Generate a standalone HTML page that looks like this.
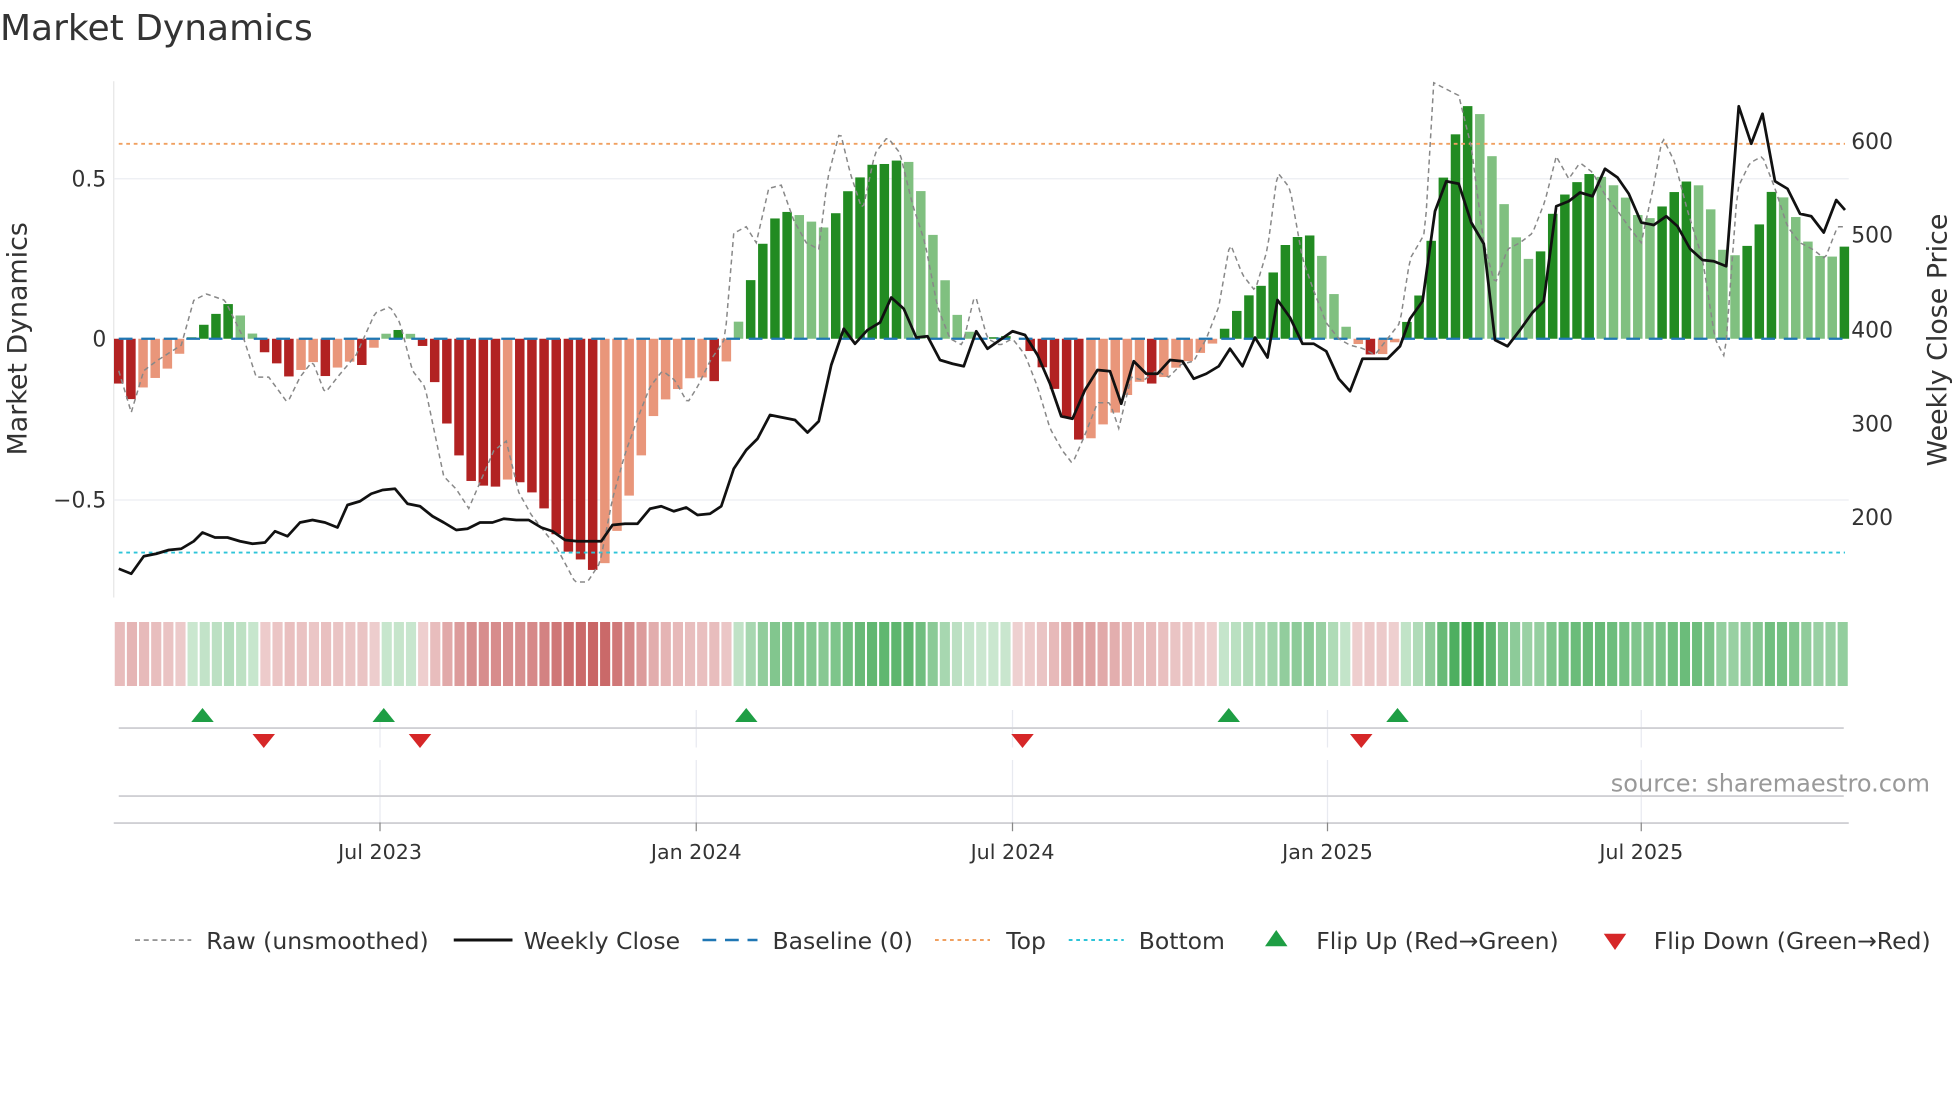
<!DOCTYPE html>
<html><head><meta charset="utf-8"><style>
html,body{margin:0;padding:0;background:#fff;}
svg{display:block;font-family:"DejaVu Sans","Liberation Sans",sans-serif;}
</style></head><body>
<svg id="s" width="1960" height="1102" viewBox="0 0 1568 881.6" xmlns="http://www.w3.org/2000/svg">
<text x="0" y="32" font-size="28.8" fill="#333">Market Dynamics</text>
<line x1="91" y1="65" x2="91" y2="478" stroke="#e6e6e6" stroke-width="1"/>
<line x1="91" y1="143" x2="1479" y2="143" stroke="#eceef2" stroke-width="1"/>
<line x1="91" y1="400" x2="1479" y2="400" stroke="#eceef2" stroke-width="1"/>
<g id="bars"></g>
<line x1="95" y1="271" x2="1476" y2="271" stroke="#1f77b4" stroke-width="1.8" stroke-dasharray="11,7"/>
<line x1="95" y1="115" x2="1476" y2="115" stroke="#f0a060" stroke-width="1.5" stroke-dasharray="3,3"/>
<line x1="95" y1="442" x2="1476" y2="442" stroke="#2ec4d8" stroke-width="1.5" stroke-dasharray="3,3"/>
<polyline id="raw" fill="none" stroke="#888" stroke-width="1.2" stroke-dasharray="4,3"/>
<polyline id="close" fill="none" stroke="#111" stroke-width="2.2" stroke-linejoin="round"/>
<g font-size="17.5" fill="#333">
<text x="85" y="149" text-anchor="end">0.5</text>
<text x="85" y="277" text-anchor="end">0</text>
<text x="85" y="406" text-anchor="end">−0.5</text>
<text x="1481" y="119">600</text>
<text x="1481" y="194">500</text>
<text x="1481" y="270">400</text>
<text x="1481" y="345">300</text>
<text x="1481" y="420">200</text>
</g>
<text transform="translate(21,271) rotate(-90)" text-anchor="middle" font-size="21.5" fill="#333">Market Dynamics</text>
<text transform="translate(1557,272) rotate(-90)" text-anchor="middle" font-size="21.5" fill="#333">Weekly Close Price</text>
<g id="heat"></g>
<g stroke="#e8eaf0" stroke-width="1">
<line x1="304" y1="568" x2="304" y2="598"/><line x1="557" y1="568" x2="557" y2="598"/><line x1="810" y1="568" x2="810" y2="598"/><line x1="1062" y1="568" x2="1062" y2="598"/><line x1="1313" y1="568" x2="1313" y2="598"/>
<line x1="304" y1="608" x2="304" y2="658"/><line x1="557" y1="608" x2="557" y2="658"/><line x1="810" y1="608" x2="810" y2="658"/><line x1="1062" y1="608" x2="1062" y2="658"/><line x1="1313" y1="608" x2="1313" y2="658"/>
</g>
<line x1="95" y1="582.4" x2="1475" y2="582.4" stroke="#d0d0d4" stroke-width="1.5"/>
<line x1="95" y1="636.8" x2="1475" y2="636.8" stroke="#d0d0d4" stroke-width="1.5"/>
<line x1="91" y1="658.4" x2="1479" y2="658.4" stroke="#d0d0d4" stroke-width="1.5"/>
<g stroke="#888" stroke-width="1"><line x1="304" y1="658" x2="304" y2="665"/><line x1="557" y1="658" x2="557" y2="665"/><line x1="810" y1="658" x2="810" y2="665"/><line x1="1062" y1="658" x2="1062" y2="665"/><line x1="1313" y1="658" x2="1313" y2="665"/></g>
<g id="marks"></g>
<text x="1544" y="633" text-anchor="end" font-size="19.2" fill="#999">source: sharemaestro.com</text>
<g font-size="16.5" fill="#333" text-anchor="middle">
<text x="304" y="687">Jul 2023</text><text x="557" y="687">Jan 2024</text><text x="810" y="687">Jul 2024</text><text x="1062" y="687">Jan 2025</text><text x="1313" y="687">Jul 2025</text>
</g>
<g font-size="18.8" fill="#333">
<line x1="108" y1="752" x2="153" y2="752" stroke="#888" stroke-width="1.3" stroke-dasharray="4,3"/>
<text x="165" y="759">Raw (unsmoothed)</text>
<line x1="363" y1="752" x2="410" y2="752" stroke="#111" stroke-width="2.4"/>
<text x="419" y="759">Weekly Close</text>
<line x1="562" y1="752" x2="606" y2="752" stroke="#1f77b4" stroke-width="2" stroke-dasharray="11,7"/>
<text x="618" y="759">Baseline (0)</text>
<line x1="748" y1="752" x2="792" y2="752" stroke="#f0a060" stroke-width="1.6" stroke-dasharray="3,3"/>
<text x="805" y="759">Top</text>
<line x1="855" y1="752" x2="899" y2="752" stroke="#2ec4d8" stroke-width="1.6" stroke-dasharray="3,3"/>
<text x="911" y="759">Bottom</text>
<polygon points="1012,757 1030,757 1021,744" fill="#1e9e44"/>
<text x="1053" y="759">Flip Up (Red→Green)</text>
<polygon points="1283,747 1301,747 1292,760" fill="#d62728"/>
<text x="1323" y="759">Flip Down (Green→Red)</text>
</g>
</svg>
<script>
(function(){
var NS="http://www.w3.org/2000/svg";
function interp(k,x){if(x<=k[0][0])return k[0][1];for(var i=1;i<k.length;i++){if(x<=k[i][0]){var a=k[i-1],b=k[i];return a[1]+(b[1]-a[1])*(x-a[0])/(b[0]-a[0]);}}return k[k.length-1][1];}
var bk=[[95,-0.14],[105,-0.19],[115,-0.15],[135,-0.09],[145,-0.04],[152,0],[162,0.04],[182,0.11],[191,0.08],[201,0.02],[206,0],[211,-0.04],[220,-0.07],[230,-0.12],[240,-0.1],[250,-0.07],[259,-0.12],[270,-0.09],[279,-0.07],[288,-0.09],[297,-0.04],[306,0.01],[316,0.03],[326,0.02],[336,0],[346,-0.11],[355,-0.24],[365,-0.34],[374,-0.44],[394,-0.47],[403,-0.44],[413,-0.44],[423,-0.47],[433,-0.51],[442,-0.59],[452,-0.66],[462,-0.68],[472,-0.72],[481,-0.73],[490,-0.64],[500,-0.53],[510,-0.41],[520,-0.26],[529,-0.2],[539,-0.17],[549,-0.13],[558,-0.11],[568,-0.14],[577,-0.12],[587,0],[597,0.14],[606,0.25],[616,0.36],[626,0.4],[636,0.39],[646,0.38],[655,0.34],[665,0.36],[675,0.45],[684,0.48],[694,0.54],[704,0.55],[713,0.54],[723,0.58],[733,0.51],[742,0.39],[752,0.24],[762,0.1],[771,0.04],[781,0],[810,0.01],[820,-0.02],[829,-0.06],[839,-0.12],[849,-0.2],[858,-0.3],[868,-0.33],[878,-0.29],[888,-0.24],[897,-0.22],[907,-0.13],[917,-0.14],[926,-0.14],[936,-0.1],[946,-0.08],[955,-0.06],[965,-0.03],[975,0],[984,0.06],[994,0.11],[1004,0.16],[1013,0.17],[1022,0.23],[1032,0.33],[1042,0.31],[1051,0.33],[1061,0.22],[1071,0.09],[1080,0.01],[1090,-0.03],[1100,-0.06],[1110,-0.04],[1118,0],[1128,0.07],[1138,0.16],[1148,0.37],[1157,0.55],[1167,0.67],[1177,0.75],[1187,0.68],[1196,0.53],[1206,0.38],[1216,0.29],[1226,0.23],[1235,0.29],[1245,0.43],[1255,0.46],[1264,0.5],[1274,0.52],[1284,0.5],[1294,0.47],[1303,0.43],[1313,0.37],[1323,0.38],[1333,0.43],[1342,0.47],[1352,0.5],[1362,0.47],[1371,0.38],[1381,0.24],[1391,0.27],[1401,0.3],[1410,0.38],[1420,0.49],[1430,0.42],[1440,0.36],[1449,0.28],[1459,0.25],[1469,0.26],[1476,0.29]];
var rk=[[95,-0.1],[105,-0.23],[115,-0.1],[125,-0.07],[145,-0.02],[155,0.12],[165,0.14],[180,0.12],[195,0.0],[205,-0.12],[215,-0.12],[230,-0.2],[240,-0.12],[250,-0.07],[260,-0.17],[270,-0.12],[285,-0.05],[300,0.08],[312,0.1],[320,0.05],[330,-0.1],[340,-0.15],[355,-0.43],[365,-0.47],[375,-0.53],[385,-0.44],[395,-0.35],[405,-0.32],[415,-0.48],[425,-0.55],[435,-0.6],[445,-0.65],[460,-0.76],[470,-0.76],[480,-0.7],[490,-0.5],[500,-0.36],[510,-0.25],[520,-0.15],[530,-0.1],[540,-0.13],[550,-0.2],[558,-0.15],[568,-0.07],[580,0.0],[587,0.33],[597,0.35],[605,0.3],[615,0.47],[625,0.48],[635,0.37],[645,0.3],[655,0.28],[662,0.5],[672,0.65],[680,0.52],[690,0.4],[700,0.58],[710,0.63],[720,0.58],[730,0.42],[740,0.3],[750,0.1],[760,0.0],[770,-0.02],[780,0.14],[790,0.0],[800,-0.02],[810,0.0],[820,-0.05],[830,-0.15],[840,-0.28],[850,-0.35],[858,-0.39],[868,-0.3],[878,-0.2],[888,-0.2],[895,-0.28],[905,-0.12],[915,-0.13],[925,-0.1],[935,-0.12],[945,-0.08],[955,-0.07],[965,0.0],[975,0.1],[984,0.3],[994,0.2],[1004,0.15],[1014,0.28],[1022,0.52],[1032,0.47],[1042,0.25],[1051,0.15],[1061,0.05],[1071,0.0],[1080,-0.02],[1090,-0.03],[1100,-0.05],[1110,0.0],[1120,0.05],[1128,0.25],[1140,0.33],[1147,0.8],[1157,0.78],[1167,0.76],[1177,0.6],[1187,0.3],[1196,0.17],[1206,0.28],[1216,0.3],[1226,0.33],[1236,0.43],[1245,0.57],[1255,0.5],[1264,0.55],[1274,0.52],[1284,0.45],[1294,0.4],[1303,0.35],[1313,0.3],[1323,0.48],[1330,0.63],[1340,0.55],[1350,0.4],[1362,0.25],[1372,0.0],[1380,-0.06],[1390,0.47],[1400,0.55],[1410,0.57],[1420,0.47],[1430,0.35],[1440,0.3],[1450,0.28],[1460,0.25],[1470,0.35],[1476,0.35]];
var ck=[[95,455],[105,459],[115,445],[125,443],[135,440],[145,439],[155,433],[162,426],[172,430],[182,430],[192,433],[202,435],[212,434],[220,425],[230,429],[240,418],[250,416],[260,418],[270,422],[278,404],[288,401],[297,395],[306,392],[316,391],[326,403],[336,405],[346,413],[355,418],[365,424],[374,423],[384,418],[394,418],[403,415],[413,416],[423,416],[433,422],[442,425],[452,432],[462,433],[472,433],[481,433],[490,420],[500,419],[510,419],[520,407],[529,405],[539,409],[549,406],[558,412],[568,411],[577,405],[587,375],[597,360],[606,351],[616,332],[626,334],[636,336],[646,346],[655,337],[665,292],[675,263],[684,275],[694,264],[704,258],[713,238],[723,247],[733,270],[742,269],[752,288],[762,291],[771,293],[781,265],[790,279],[800,272],[810,265],[820,268],[830,284],[840,307],[849,333],[858,335],[868,312],[878,296],[888,297],[897,323],[907,289],[917,299],[926,299],[936,288],[946,289],[955,303],[965,299],[975,293],[984,279],[994,293],[1004,270],[1014,286],[1022,240],[1032,254],[1042,275],[1051,275],[1061,281],[1071,303],[1080,313],[1090,287],[1100,287],[1110,287],[1120,277],[1128,255],[1138,241],[1148,169],[1157,145],[1167,147],[1177,178],[1187,195],[1196,272],[1206,277],[1216,264],[1226,250],[1235,241],[1245,165],[1255,161],[1264,154],[1274,157],[1284,135],[1294,142],[1303,155],[1313,178],[1323,180],[1333,173],[1342,181],[1352,199],[1362,208],[1371,209],[1381,213],[1391,85],[1401,115],[1410,91],[1420,145],[1430,151],[1440,171],[1449,173],[1459,186],[1469,160],[1476,168]];
function Y(v){return 271-256*v;}
var bars=document.getElementById('bars'),heat=document.getElementById('heat');
var N=143,x0=95,x1=1475.5,step=(x1-x0)/(N-1),prev=0,bw=7.6;
var hs=(1479-91)/N;
for(var i=0;i<N;i++){
 var x=x0+i*step,v=interp(bk,x);
 var inc=Math.abs(v)>=Math.abs(prev);
 var col=v>=0?(inc?'#228b22':'#80c080'):(inc?'#b22222':'#e9967a');
 prev=v;
 if(Math.abs(v)>0.004){
  var r=document.createElementNS(NS,'rect');
  r.setAttribute('x',x-bw/2);r.setAttribute('width',bw);
  r.setAttribute('y',Math.min(Y(v),271));r.setAttribute('height',Math.abs(Y(v)-271));
  r.setAttribute('fill',col);bars.appendChild(r);
 }
 var a=Math.min(Math.abs(v)/0.75,1);
 var hc;
 if(v>=0){hc='rgba(46,160,67,'+(0.25+0.7*a).toFixed(3)+')';}
 else{hc='rgba(190,70,70,'+(0.25+0.6*a).toFixed(3)+')';}
 var h=document.createElementNS(NS,'rect');
 h.setAttribute('x',91+i*hs+0.8);h.setAttribute('width',hs-1.6);
 h.setAttribute('y',497.6);h.setAttribute('height',51.2);h.setAttribute('fill',hc);heat.appendChild(h);
}
var pr=[],pc=[];
for(var xx=95;xx<=1476;xx+=2){pr.push(xx+','+Y(interp(rk,xx)).toFixed(1));}
for(var j=0;j<ck.length;j++){pc.push(ck[j][0]+','+ck[j][1]);}
document.getElementById('raw').setAttribute('points',pr.join(' '));
document.getElementById('close').setAttribute('points',pc.join(' '));
var m=document.getElementById('marks'),ups=[162,307,597,983,1118],dns=[211,336,818,1089];
ups.forEach(function(x){var p=document.createElementNS(NS,'polygon');p.setAttribute('points',(x-9)+',577.6 '+(x+9)+',577.6 '+x+',566.4');p.setAttribute('fill','#1e9e44');m.appendChild(p);});
dns.forEach(function(x){var p=document.createElementNS(NS,'polygon');p.setAttribute('points',(x-9)+',587.2 '+(x+9)+',587.2 '+x+',598.4');p.setAttribute('fill','#d62728');m.appendChild(p);});
})();
</script>
</body></html>
